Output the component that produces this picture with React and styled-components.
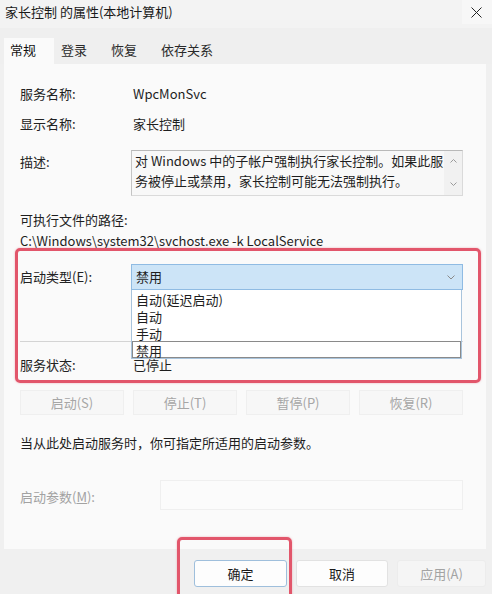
import React from "react";
import styled, { createGlobalStyle } from "styled-components";

const GlobalStyle = createGlobalStyle`
  html, body {
    margin: 0;
    padding: 0;
    background: #f0f0f0;
  }
  body {
    font-family: "Noto Sans CJK SC", "Noto Sans", "Liberation Sans", sans-serif;
    font-size: 13px;
    color: #1e1e1e;
  }
`;

const Window = styled.div`
  position: relative;
  width: 492px;
  height: 594px;
  overflow: hidden;
  background: #f0f0f0;
  display: flex;
  flex-direction: column;
`;

const TitleBar = styled.div`
  height: 28px;
  display: flex;
  align-items: flex-start;
  justify-content: space-between;
  background: #f3f3f3;
`;

const Title = styled.div`
  padding: 3px 0 0 5px;
  line-height: 18px;
  color: #1a1a1a;
`;

const CloseButton = styled.div`
  width: 28px;
  height: 24px;
  display: flex;
  align-items: center;
  justify-content: center;
  background: #f7f7f7;
  padding-right: 2px;
`;

const TabStrip = styled.div`
  height: 36px;
  display: flex;
  align-items: flex-end;
  padding-left: 4px;
  background: #efefef;
`;

const Tab = styled.div`
  height: 26px;
  line-height: 24px;
  padding: ${(p) => (p.$active ? "0 18px 0 6px" : "0 17px 0 7px")};
  background: ${(p) => (p.$active ? "#fafafa" : "transparent")};
  color: ${(p) => (p.$active ? "#111" : "#2a2a2a")};
`;

const Panel = styled.div`
  height: 485px;
  margin: 0 6px 0 4px;
  padding: 20px 23px 0 16px;
  box-sizing: border-box;
  background: #fafafa;
  display: flex;
  flex-direction: column;
`;

const Row = styled.div`
  display: grid;
  grid-template-columns: ${(p) => p.$labelWidth || "111px"} 1fr;
  align-items: ${(p) => p.$align || "center"};
  min-height: 20px;
  line-height: 20px;
  margin-top: ${(p) => p.$mt || 0}px;
`;

const Label = styled.div`
  color: ${(p) => (p.$disabled ? "#a2a2a2" : "#222")};
  padding-top: ${(p) => p.$pt || 0}px;
  white-space: nowrap;
`;

const Value = styled.div`
  padding-left: 2px;
  white-space: nowrap;
`;

const Line = styled.div`
  line-height: 20px;
  white-space: nowrap;
  margin-top: ${(p) => p.$mt || 0}px;
  color: #1e1e1e;
`;

const DescBox = styled.div`
  height: 46px;
  box-sizing: border-box;
  border: 1px solid #dadada;
  border-top-color: #b9b9b9;
  border-left-color: #c4c4c4;
  background: #f8f8f8;
  display: flex;
`;

const DescText = styled.div`
  flex: 1;
  padding: 0 0 0 3px;
  line-height: 20px;
  white-space: nowrap;
  overflow: hidden;
`;

const ScrollBar = styled.div`
  width: 18px;
  background: #f1f1f1;
  display: flex;
  flex-direction: column;
  align-items: center;
  justify-content: space-between;
  padding: 8px 0 9px;
`;

const ComboWrap = styled.div`
  position: relative;
`;

const Combo = styled.div`
  height: 26px;
  box-sizing: border-box;
  border: 1px solid #8fbbe3;
  background: #cce4f7;
  display: flex;
  align-items: center;
  justify-content: space-between;
  padding: 0 7px 0 4px;
`;

const DropList = styled.div`
  position: absolute;
  top: 100%;
  left: 0;
  right: 1px;
  height: 69px;
  box-sizing: border-box;
  background: #ffffff;
  border: 1px solid #a9c4dc;
  border-top: none;
  z-index: 2;
`;

const DropItem = styled.div`
  height: 17px;
  line-height: 17px;
  padding-left: 3px;
  box-sizing: border-box;
  border: 1px solid ${(p) => (p.$selected ? "#8a8a8a" : "transparent")};
  margin-top: ${(p) => (p.$selected ? 0 : 0)}px;
`;

const Divider = styled.div`
  height: 1px;
  background: #d4d4d4;
  margin-top: ${(p) => p.$mt || 0}px;
`;

const ButtonRow = styled.div`
  display: grid;
  grid-template-columns: repeat(4, 1fr);
  gap: 9px;
  margin-top: ${(p) => p.$mt || 0}px;
`;

const GhostButton = styled.div`
  height: 25px;
  line-height: 23px;
  box-sizing: border-box;
  text-align: center;
  border: 1px solid #efefef;
  background: #f7f7f7;
  color: #a6a6a6;
`;

const ParamInput = styled.div`
  height: 30px;
  box-sizing: border-box;
  border: 1px solid #efefef;
  background: #fbfbfb;
`;

const Underline = styled.span`
  text-decoration: underline;
`;

const Footer = styled.div`
  flex: 1;
  display: flex;
  justify-content: flex-end;
  align-items: flex-start;
  gap: 9px;
  padding: 11px 6px 0 0;
`;

const DialogButton = styled.div`
  width: ${(p) => p.$w || 92}px;
  height: 27px;
  line-height: 25px;
  box-sizing: border-box;
  text-align: center;
  border-radius: 3px;
  border: 1px solid ${(p) => (p.$primary ? "#9fbfdc" : p.$disabled ? "#ececec" : "#e2e2e2")};
  background: ${(p) => (p.$disabled ? "#f5f5f5" : "#fdfdfd")};
  color: ${(p) => (p.$disabled ? "#a3a3a3" : "#1a1a1a")};
`;

const Highlight = styled.div`
  position: absolute;
  left: ${(p) => p.$x}px;
  top: ${(p) => p.$y}px;
  width: ${(p) => p.$w}px;
  height: ${(p) => p.$h}px;
  box-sizing: border-box;
  border: 3px solid #e2566b;
  border-radius: 5px;
  box-shadow: 0 0 2px rgba(226, 86, 107, 0.5);
  pointer-events: none;
  z-index: 5;
`;

const Arrow = ({ up }) => (
  <svg width="7" height="4" viewBox="0 0 7 4">
    <path d={up ? "M0.5 3.5 L3.5 0.5 L6.5 3.5" : "M0.5 0.5 L3.5 3.5 L6.5 0.5"} fill="none" stroke="#9a9a9a" strokeWidth="1" />
  </svg>
);

export default function App() {
  return (
    <>
      <GlobalStyle />
      <Window>
        <TitleBar>
          <Title>家长控制 的属性(本地计算机)</Title>
          <CloseButton>
            <svg width="11" height="11" viewBox="0 0 11 11">
              <path d="M0.5 0.5 L10.5 10.5 M10.5 0.5 L0.5 10.5" stroke="#222" strokeWidth="1" />
            </svg>
          </CloseButton>
        </TitleBar>

        <TabStrip>
          <Tab $active>常规</Tab>
          <Tab>登录</Tab>
          <Tab>恢复</Tab>
          <Tab>依存关系</Tab>
        </TabStrip>

        <Panel>
          <Row>
            <Label>服务名称:</Label>
            <Value>WpcMonSvc</Value>
          </Row>
          <Row $mt={10}>
            <Label>显示名称:</Label>
            <Value>家长控制</Value>
          </Row>
          <Row $mt={16} $align="start">
            <Label $pt={2}>描述:</Label>
            <DescBox>
              <DescText>
                对 Windows 中的子帐户强制执行家长控制。如果此服
                <br />
                务被停止或禁用，家长控制可能无法强制执行。
              </DescText>
              <ScrollBar>
                <Arrow up />
                <Arrow />
              </ScrollBar>
            </DescBox>
          </Row>
          <Line $mt={14}>可执行文件的路径:</Line>
          <Line $mt={1}>C:\Windows\system32\svchost.exe -k LocalService</Line>

          <Row $mt={13}>
            <Label>启动类型(E):</Label>
            <ComboWrap>
              <Combo>
                <span>禁用</span>
                <svg width="8" height="5" viewBox="0 0 8 5">
                  <path d="M0.5 0.5 L4 4 L7.5 0.5" fill="none" stroke="#8a8a8a" strokeWidth="1" />
                </svg>
              </Combo>
              <DropList>
                <DropItem>自动(延迟启动)</DropItem>
                <DropItem>自动</DropItem>
                <DropItem>手动</DropItem>
                <DropItem $selected>禁用</DropItem>
              </DropList>
            </ComboWrap>
          </Row>

          <Divider $mt={51} />

          <Row $mt={13}>
            <Label>服务状态:</Label>
            <Value>已停止</Value>
          </Row>

          <ButtonRow $mt={15}>
            <GhostButton>启动(S)</GhostButton>
            <GhostButton>停止(T)</GhostButton>
            <GhostButton>暂停(P)</GhostButton>
            <GhostButton>恢复(R)</GhostButton>
          </ButtonRow>

          <Line $mt={18}>当从此处启动服务时，你可指定所适用的启动参数。</Line>

          <Row $mt={27} $labelWidth="140px">
            <Label $disabled $pt={3}>
              启动参数(<Underline>M</Underline>):
            </Label>
            <ParamInput />
          </Row>
        </Panel>

        <Footer>
          <DialogButton $primary $w={93}>确定</DialogButton>
          <DialogButton $w={92}>取消</DialogButton>
          <DialogButton $disabled $w={89}>应用(A)</DialogButton>
        </Footer>

        <Highlight $x={15} $y={248} $w={466} $h={135} />
        <Highlight $x={177} $y={537} $w={115} $h={70} />
      </Window>
    </>
  );
}
